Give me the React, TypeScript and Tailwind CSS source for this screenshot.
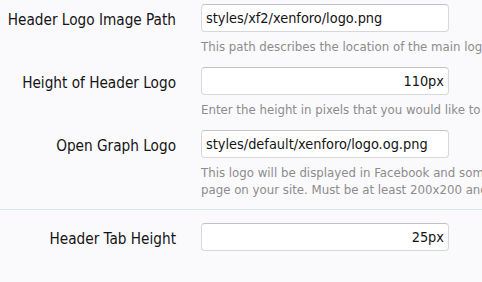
type Row = { label: string; value: string; right?: boolean; help?: string[] };

const rows: Row[] = [
  {
    label: "Header Logo Image Path",
    value: "styles/xf2/xenforo/logo.png",
    help: ["This path describes the location of the main logo image."],
  },
  {
    label: "Height of Header Logo",
    value: "110px",
    right: true,
    help: ["Enter the height in pixels that you would like to use for the header logo."],
  },
  {
    label: "Open Graph Logo",
    value: "styles/default/xenforo/logo.og.png",
    help: [
      "This logo will be displayed in Facebook and some other social networks when linking to a",
      "page on your site. Must be at least 200x200 and will be displayed as a square.",
    ],
  },
];

function FormRow({ row }: { row: Row }) {
  return (
    <div className="flex">
      <div className="w-[176px] shrink-0 text-right text-[15.2px] leading-[20px] text-[#141414] pt-[6px] whitespace-nowrap">
        {row.label}
      </div>
      <div className="ml-[25px] w-[248px] shrink-0">
        <div
          className={`h-[28px] rounded-[4px] border border-[#d8d8d8] border-t-[#c2c2c2] bg-white px-[4px] text-[14.4px] leading-[26px] text-[#141414] whitespace-nowrap ${row.right ? "text-right" : "text-left"}`}
        >
          {row.value}
        </div>
        {row.help && (
          <div className="mt-[6px] w-[400px] text-[13.1px] leading-[17px] text-[#8c8c8c]">
            {row.help.map((h) => (
              <div key={h} className="whitespace-nowrap">
                {h}
              </div>
            ))}
          </div>
        )}
      </div>
    </div>
  );
}

export default function App() {
  return (
    <div className="w-[482px] h-[282px] overflow-hidden bg-[#fafafc] font-['DejaVu_Sans',sans-serif] font-stretch-condensed">
      <div className="flex flex-col gap-[12px] pt-[4px] pb-[11px]">
        {rows.map((r) => (
          <FormRow key={r.label} row={r} />
        ))}
      </div>
      <div className="border-t border-[#d6e8ec] pt-[13px]">
        <FormRow row={{ label: "Header Tab Height", value: "25px", right: true }} />
      </div>
    </div>
  );
}
